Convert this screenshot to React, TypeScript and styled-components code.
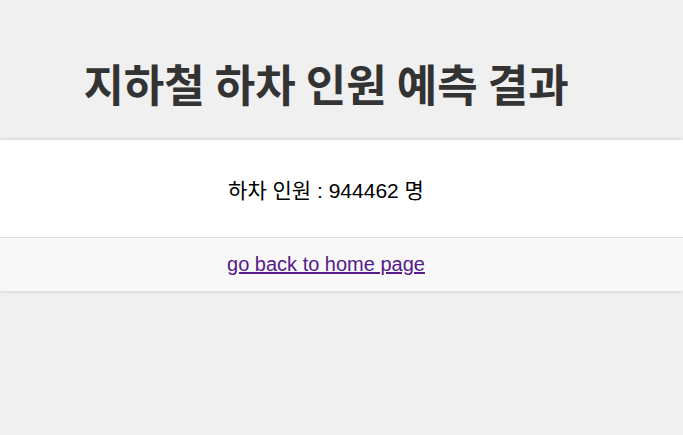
import React from 'react';
import styled, { createGlobalStyle } from 'styled-components';

const GlobalStyle = createGlobalStyle`
	html,
	body {
		margin: 0;
		padding: 0;
		background: #f0f0f0;
	}
	body {
		font-family: 'Liberation Sans', Arial, 'Noto Sans CJK KR', sans-serif;
	}
`;

const Page = styled.main`
	display: flex;
	flex-direction: column;
	min-height: 100vh;
`;

const Title = styled.h1`
	margin: 0;
	padding: 56px 31px 29px 0;
	text-align: center;
	font-family: 'Noto Sans CJK KR', sans-serif;
	font-size: 44px;
	font-weight: 700;
	line-height: 55px;
	color: #333333;
`;

const Card = styled.section`
	background: #ffffff;
	box-shadow: 0 0 4px rgba(0, 0, 0, 0.18);
`;

const Body = styled.div`
	display: flex;
	align-items: center;
	justify-content: center;
	height: 97px;
	padding-right: 31px;
	font-size: 21px;
	color: #000000;
`;

const Footer = styled.div`
	display: flex;
	align-items: center;
	justify-content: center;
	height: 53px;
	padding-right: 31px;
	background: #f8f8f8;
	border-top: 1px solid #dddddd;

	a {
		font-size: 20px;
		color: #551a8b;
		text-decoration: underline;
	}
`;

const App = () => {
	const count = 944462;

	return (
		<>
			<GlobalStyle />
			<Page>
				<Title>지하철 하차 인원 예측 결과</Title>
				<Card>
					<Body>하차 인원 : {count} 명</Body>
					<Footer>
						<a href='#'>go back to home page</a>
					</Footer>
				</Card>
			</Page>
		</>
	);
};

export default App;
